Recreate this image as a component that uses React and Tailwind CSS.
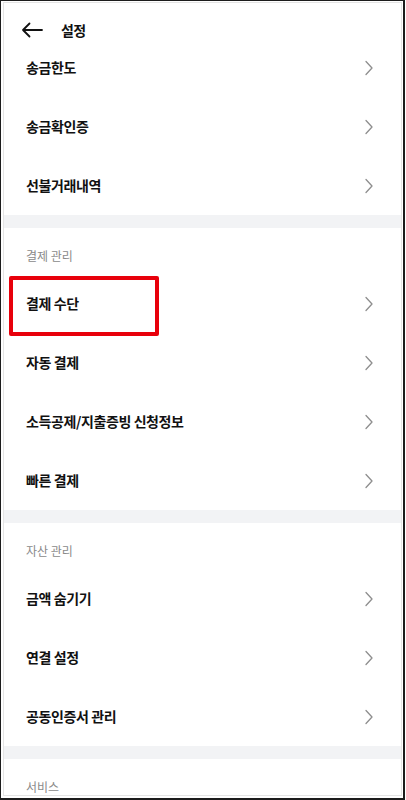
import React from "react";

const font = { fontFamily: '"Noto Sans CJK KR", "Noto Sans", sans-serif' };

function Chevron() {
  return (
    <svg width="10" height="16" viewBox="0 0 10 16" fill="none">
      <path d="M2 1.5 L8 8 L2 14.5" stroke="#8e8e8e" strokeWidth="1.3" strokeLinecap="round" strokeLinejoin="round" />
    </svg>
  );
}

function Row({ label, highlight }) {
  return (
    <div className="relative h-[59px] flex items-center justify-between pl-[22px] pr-[27px]">
      <span className="text-[14px] font-bold text-[#111] tracking-[-0.4px]">{label}</span>
      <Chevron />
      {highlight && (
        <div className="absolute left-[5px] top-[2px] w-[150px] h-[60px] border-[4px] border-[#e8000b] rounded-[2px]" />
      )}
    </div>
  );
}

function Label({ children }) {
  return (
    <div className="h-[46px] pt-[20px] pl-[22px]">
      <div className="text-[12px] leading-[16px] text-[#8a8a8a] tracking-[0px]">{children}</div>
    </div>
  );
}

function Divider() {
  return <div className="h-[13px] bg-[#f2f3f5]" />;
}

export default function App() {
  return (
    <div className="w-[406px] h-[800px] bg-white overflow-hidden" style={font}>
      <div className="w-[405px] h-[800px] border-l border-t border-r-2 border-b-2 border-[#1c1c1c] bg-white">
        <div className="ml-[2px] mt-[1px] w-[399px] h-[794px] border border-[#e4e4e4] overflow-hidden bg-white">
          <div className="h-[35px] pt-[19px] flex items-center pl-[16px]">
            <div className="h-[16px] flex items-center">
              <svg width="24" height="16" viewBox="0 0 24 16" fill="none">
                <path d="M22 8 H3 M9.5 1.5 L3 8 L9.5 14.5" stroke="#111" strokeWidth="1.8" strokeLinecap="round" strokeLinejoin="round" />
              </svg>
              <span className="ml-[17px] text-[14px] font-bold text-[#111] tracking-[-0.6px]">설정</span>
            </div>
          </div>
          <Row label="송금한도" />
          <Row label="송금확인증" />
          <Row label="선불거래내역" />
          <Divider />
          <Label>결제 관리</Label>
          <Row label="결제 수단" highlight />
          <Row label="자동 결제" />
          <Row label="소득공제/지출증빙 신청정보" />
          <Row label="빠른 결제" />
          <Divider />
          <Label>자산 관리</Label>
          <Row label="금액 숨기기" />
          <Row label="연결 설정" />
          <Row label="공동인증서 관리" />
          <Divider />
          <Label>서비스</Label>
        </div>
      </div>
    </div>
  );
}
